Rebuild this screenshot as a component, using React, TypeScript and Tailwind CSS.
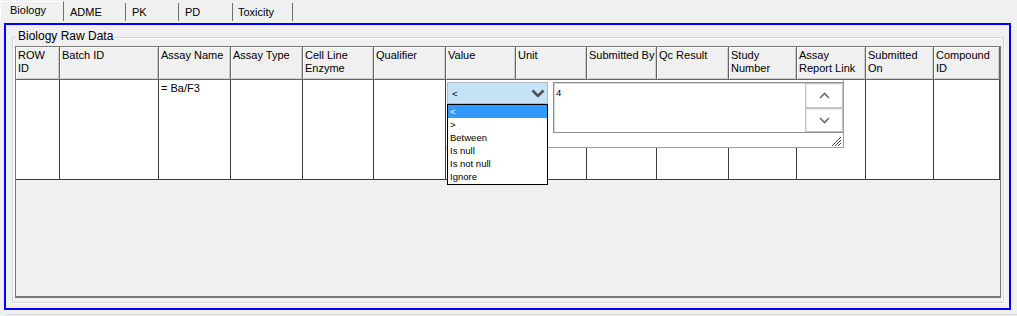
const tabs = [
  { label: "Biology", cls: "w-[64px] mt-[1px] h-[20px] pl-[9px] pt-[2px] border-l border-t border-white" },
  { label: "ADME", cls: "w-[62px] mt-[3px] h-[18px] pl-[6px] pt-[3px]" },
  { label: "PK", cls: "w-[53px] mt-[3px] h-[18px] pl-[6px] pt-[3px]" },
  { label: "PD", cls: "w-[54px] mt-[3px] h-[18px] pl-[6px] pt-[3px]" },
  { label: "Toxicity", cls: "w-[60px] mt-[3px] h-[18px] pl-[5px] pt-[3px]" },
];

const columns: string[][] = [
  ["ROW", "ID"],
  ["Batch ID"],
  ["Assay Name"],
  ["Assay Type"],
  ["Cell Line", "Enzyme"],
  ["Qualifier"],
  ["Value"],
  ["Unit"],
  ["Submitted By"],
  ["Qc Result"],
  ["Study", "Number"],
  ["Assay", "Report Link"],
  ["Submitted", "On"],
  ["Compound", "ID"],
];

const cells = ["", "", "= Ba/F3", "", "", "", "", "", "", "", "", "", "", ""];

const options = ["<", ">", "Between", "Is null", "Is not null", "Ignore"];

const gridCols =
  "grid grid-cols-[44px_99px_72px_72px_71px_72px_70px_71px_70px_72px_68px_69px_68px_66px]";

function Chevron({ up = false, className = "" }: { up?: boolean; className?: string }) {
  return (
    <svg width="11" height="7" viewBox="0 0 11 7" className={className}>
      <path
        d={up ? "M1 6 L5.5 1.5 L10 6" : "M1 1 L5.5 5.5 L10 1"}
        fill="none"
        stroke="#6a6a6a"
        strokeWidth="1.6"
      />
    </svg>
  );
}

function ValueEditor() {
  return (
    <div className="absolute left-[430px] top-[33px] w-[398px] h-[68px] bg-white border-r border-b border-[#a0a0a0] flex items-start pl-px pt-[2px] text-[9.5px] leading-[13px]">
      {/* qualifier combo */}
      <div className="relative w-[101px] h-[22px] shrink-0">
        <div className="flex h-full items-center justify-between border border-[#a9b9c6] bg-[#c6e3f6] pl-[4px] pr-[2px]">
          <span>&lt;</span>
          <svg width="14" height="9" viewBox="0 0 14 9">
            <path d="M1.5 1.5 L7 7 L12.5 1.5" fill="none" stroke="#505050" strokeWidth="2.6" />
          </svg>
        </div>
        {/* open list */}
        <div className="absolute left-0 top-[22px] z-10 w-[101px] border border-black bg-white pb-px">
          {options.map((o, i) => (
            <div
              key={o}
              className={
                i === 0
                  ? "h-[13px] bg-[#3399ff] pl-[2px] text-white"
                  : "h-[13px] pl-[2px] text-black"
              }
            >
              {o}
            </div>
          ))}
        </div>
      </div>

      {/* value text box with spinner */}
      <div className="ml-[5px] flex h-[51px] flex-1 border-t border-l border-b border-[#8e8e8e]">
        <div className="flex-1 pl-[2px] pt-[3px] shadow-[inset_1px_1px_0_#d8d8d8]">4</div>
        <div className="flex w-[38px] flex-col">
          <div className="flex h-[25px] items-center justify-center border border-[#c2c2c2] bg-white shadow-[inset_1px_1px_0_#ececec]">
            <Chevron up />
          </div>
          <div className="flex h-[24px] items-center justify-center border border-[#c2c2c2] bg-white shadow-[inset_1px_1px_0_#ececec]">
            <Chevron />
          </div>
        </div>
      </div>

      {/* size grip */}
      <svg width="12" height="11" viewBox="0 0 12 11" className="absolute right-[1px] bottom-[1px]">
        <path d="M11 2 L2 11 M11 5 L5 11 M11 8 L8 11" stroke="#404040" strokeWidth="1" />
      </svg>
    </div>
  );
}

export default function App() {
  return (
    <div className="w-[1017px] h-[316px] overflow-hidden bg-[#f0f0f0] font-['Liberation_Sans',Arial,sans-serif] text-[11px] text-black">
      {/* Tab strip */}
      <div className="flex h-[23px] items-start">
        {tabs.map((t) => (
          <div
            key={t.label}
            className={`${t.cls} border-r border-r-[#6e6e6e] leading-[13px] whitespace-nowrap`}
          >
            {t.label}
          </div>
        ))}
      </div>

      {/* Tab page */}
      <div className="ml-[4px] flex h-[287px] w-[1007px] flex-col border-2 border-[#0000ff]">
        {/* Group box */}
        <div className="relative mt-[12px] mb-[5px] ml-[6px] mr-[5px] flex flex-1 flex-col border border-[#d5d5d5] shadow-[inset_1px_1px_0_#ffffff,1px_1px_0_#ffffff]">
          <span className="absolute left-[3px] -top-[9px] bg-[#f0f0f0] px-[2px] text-[12px] leading-[14px]">
            Biology Raw Data
          </span>

          {/* Grid */}
          <div className="mt-[8px] mb-[4px] ml-[2px] mr-[2px] flex-1 border border-[#7a7a7a] border-b-2">
            <div className="relative">
              <div className={gridCols}>
                {columns.map((c, i) => (
                  <div
                    key={i}
                    className="h-[33px] overflow-hidden whitespace-nowrap border-r border-b border-[#646464] bg-[#f0f0f0] px-[2px] pt-[2px] leading-[13px] shadow-[inset_1px_1px_0_#ffffff,inset_-1px_-1px_0_#cfcfcf]"
                  >
                    {c.map((l) => (
                      <div key={l}>{l}</div>
                    ))}
                  </div>
                ))}
              </div>
              <div className={gridCols}>
                {cells.map((v, i) => (
                  <div
                    key={i}
                    className="h-[100px] border-r border-b border-[#3c3c3c] bg-white px-[2px] pt-[2px] leading-[13px] whitespace-nowrap"
                  >
                    {v}
                  </div>
                ))}
              </div>
              <ValueEditor />
            </div>
          </div>
        </div>
      </div>

      <div className="mt-[4px] ml-[6px] border-t border-[#dadada]" />
    </div>
  );
}
